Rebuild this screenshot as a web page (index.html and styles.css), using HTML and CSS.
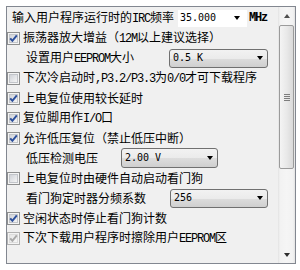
FILE: index.html
```html
<!DOCTYPE html>
<html>
<head>
<meta charset="utf-8">
<link rel="stylesheet" href="styles.css">
</head>
<body>
<svg class="defs" width="0" height="0">
  <defs>
    <linearGradient id="cbg" x1="0" y1="0" x2="1" y2="1">
      <stop offset="0" stop-color="#cdd0d6"/>
      <stop offset="1" stop-color="#f7f7f7"/>
    </linearGradient>
    <linearGradient id="cbd" x1="0" y1="0" x2="1" y2="1">
      <stop offset="0" stop-color="#e6e6e6"/>
      <stop offset="1" stop-color="#f7f7f7"/>
    </linearGradient>
  </defs>
</svg>
<div class="panel">
  <div class="list">
    <div class="row r1">
      <span class="lbl w1">输入用户程序运行时的<span class="m">IRC</span>频率</span>
      <div class="edit"><span class="v">35.000</span><span class="tri"></span></div>
      <span class="m unit">MHz</span>
    </div>
    <div class="row">
      <svg class="cb" viewBox="0 0 13 13"><rect x="0.5" y="0.5" width="12" height="12" fill="#f4f4f4" stroke="#8e8f8f"/><rect x="2.5" y="2.5" width="8" height="8" fill="url(#cbg)" stroke="#c2c5ca"/><path d="M3.2 6.3 L5.4 8.8 L9.8 3.4" fill="none" stroke="#2c4f9c" stroke-width="2"/></svg>
      <span class="lbl">振荡器放大增益（<span class="m">12M</span>以上建议选择）</span>
    </div>
    <div class="row ind">
      <span class="lbl w3">设置用户<span class="m">EEPROM</span>大小</span>
      <div class="combo c3"><span class="v">0.5 K</span><span class="tri"></span></div>
    </div>
    <div class="row">
      <svg class="cb" viewBox="0 0 13 13"><rect x="0.5" y="0.5" width="12" height="12" fill="#f4f4f4" stroke="#8e8f8f"/><rect x="2.5" y="2.5" width="8" height="8" fill="url(#cbg)" stroke="#c2c5ca"/></svg>
      <span class="lbl">下次冷启动时<span class="m">,P3.2/P3.3</span>为<span class="m">0/0</span>才可下载程序</span>
    </div>
    <div class="row">
      <svg class="cb" viewBox="0 0 13 13"><rect x="0.5" y="0.5" width="12" height="12" fill="#f4f4f4" stroke="#8e8f8f"/><rect x="2.5" y="2.5" width="8" height="8" fill="url(#cbg)" stroke="#c2c5ca"/><path d="M3.2 6.3 L5.4 8.8 L9.8 3.4" fill="none" stroke="#2c4f9c" stroke-width="2"/></svg>
      <span class="lbl">上电复位使用较长延时</span>
    </div>
    <div class="row">
      <svg class="cb" viewBox="0 0 13 13"><rect x="0.5" y="0.5" width="12" height="12" fill="#f4f4f4" stroke="#8e8f8f"/><rect x="2.5" y="2.5" width="8" height="8" fill="url(#cbg)" stroke="#c2c5ca"/><path d="M3.2 6.3 L5.4 8.8 L9.8 3.4" fill="none" stroke="#2c4f9c" stroke-width="2"/></svg>
      <span class="lbl">复位脚用作<span class="m">I/O</span>口</span>
    </div>
    <div class="row">
      <svg class="cb" viewBox="0 0 13 13"><rect x="0.5" y="0.5" width="12" height="12" fill="#f4f4f4" stroke="#8e8f8f"/><rect x="2.5" y="2.5" width="8" height="8" fill="url(#cbg)" stroke="#c2c5ca"/><path d="M3.2 6.3 L5.4 8.8 L9.8 3.4" fill="none" stroke="#2c4f9c" stroke-width="2"/></svg>
      <span class="lbl">允许低压复位（禁止低压中断）</span>
    </div>
    <div class="row ind">
      <span class="lbl w8">低压检测电压</span>
      <div class="combo c8"><span class="v">2.00 V</span><span class="tri"></span></div>
    </div>
    <div class="row">
      <svg class="cb" viewBox="0 0 13 13"><rect x="0.5" y="0.5" width="12" height="12" fill="#f4f4f4" stroke="#8e8f8f"/><rect x="2.5" y="2.5" width="8" height="8" fill="url(#cbg)" stroke="#c2c5ca"/></svg>
      <span class="lbl">上电复位时由硬件自动启动看门狗</span>
    </div>
    <div class="row ind">
      <span class="lbl w10">看门狗定时器分频系数</span>
      <div class="combo c10"><span class="v">256</span><span class="tri"></span></div>
    </div>
    <div class="row">
      <svg class="cb" viewBox="0 0 13 13"><rect x="0.5" y="0.5" width="12" height="12" fill="#f4f4f4" stroke="#8e8f8f"/><rect x="2.5" y="2.5" width="8" height="8" fill="url(#cbg)" stroke="#c2c5ca"/><path d="M3.2 6.3 L5.4 8.8 L9.8 3.4" fill="none" stroke="#2c4f9c" stroke-width="2"/></svg>
      <span class="lbl">空闲状态时停止看门狗计数</span>
    </div>
    <div class="row">
      <svg class="cb" viewBox="0 0 13 13"><rect x="0.5" y="0.5" width="12" height="12" fill="#f4f4f4" stroke="#b1b1b1"/><rect x="2.5" y="2.5" width="8" height="8" fill="url(#cbd)" stroke="#dcdcdc"/><path d="M3.2 6.3 L5.4 8.8 L9.8 3.4" fill="none" stroke="#a9a9a9" stroke-width="2"/></svg>
      <span class="lbl">下次下载用户程序时擦除用户<span class="m">EEPROM</span>区</span>
    </div>
  </div>
  <div class="sb">
    <div class="sbtn"><span class="up"></span></div>
    <div class="track">
      <div class="thumb"><span class="grip"></span></div>
    </div>
    <div class="sbtn"><span class="down"></span></div>
  </div>
</div>
</body>
</html>
```
FILE: styles.css
```css
html, body {
  margin: 0;
  padding: 0;
  background: #ffffff;
}
body {
  font-family: "Noto Sans CJK SC", sans-serif;
  font-size: 12px;
  line-height: 14px;
  color: #000;
}
.defs {
  display: block;
  width: 0;
  height: 0;
}
.panel {
  margin: 6px 0 0 6px;
  width: 290px;
  height: 258px;
  box-sizing: border-box;
  border: 1px solid #828790;
  background: #f0f0f0;
  display: flex;
}
.list {
  flex: 1;
  padding-top: 1px;
  display: flex;
  flex-direction: column;
}
.row {
  height: 20px;
  display: flex;
  align-items: center;
  white-space: nowrap;
}
.r1 {
  padding-left: 5px;
}
.ind {
  padding-left: 19px;
}
.cb {
  width: 13px;
  height: 13px;
  flex: none;
  margin-right: 3px;
}
.lbl {
  display: block;
}
.w1 { width: 166px; }
.w3 { width: 143px; }
.w8 { width: 95px; }
.w10 { width: 144px; }
.m {
  font-family: "Liberation Mono", monospace;
  font-size: 12px;
  letter-spacing: -1.2px;
}
.v {
  font-family: "DejaVu Sans Mono", monospace;
  font-size: 10px;
  flex: 1;
}
.edit {
  width: 69px;
  height: 17px;
  background: #fff;
  display: flex;
  align-items: center;
  padding: 0 7px 0 2px;
  box-sizing: border-box;
}
.unit {
  margin-left: 2px;
  font-weight: bold;
}
.tri {
  width: 0;
  height: 0;
  border-left: 3.5px solid transparent;
  border-right: 3.5px solid transparent;
  border-top: 4px solid #000;
  flex: none;
}
.combo {
  height: 19px;
  box-sizing: border-box;
  border: 1px solid #707070;
  border-radius: 3px;
  background: linear-gradient(to bottom, #f2f2f2 0%, #ebebeb 50%, #dddddd 51%, #cfcfcf 100%);
  display: flex;
  align-items: center;
  padding: 0 4px 0 3px;
}
.c3 { width: 99px; }
.c8 { width: 97px; height: 20px; }
.c10 { width: 98px; }
.sb {
  width: 17px;
  display: flex;
  flex-direction: column;
  background: linear-gradient(to right, #e3e3e3 0, #f2f2f2 2px, #f5f5f5 50%, #f2f2f2 15px, #e3e3e3 17px);
}
.sbtn {
  height: 17px;
  display: flex;
  align-items: center;
  justify-content: center;
}
.up {
  width: 0;
  height: 0;
  border-left: 3.5px solid transparent;
  border-right: 3.5px solid transparent;
  border-bottom: 4px solid #4e4e4e;
}
.down {
  width: 0;
  height: 0;
  border-left: 3.5px solid transparent;
  border-right: 3.5px solid transparent;
  border-top: 4px solid #2e2e2e;
}
.track {
  flex: 1;
  padding: 1px 1px 0 1px;
}
.thumb {
  height: 144px;
  box-sizing: border-box;
  border: 1px solid #9b9b9b;
  border-radius: 2px;
  background: linear-gradient(to right, #f4f4f4 0%, #e9e9e9 50%, #dadada 100%);
  display: flex;
  align-items: center;
  justify-content: center;
}
.grip {
  width: 6px;
  height: 7px;
  background: repeating-linear-gradient(to bottom, #7d7d7d 0, #7d7d7d 1px, transparent 1px, transparent 2px);
}
```
